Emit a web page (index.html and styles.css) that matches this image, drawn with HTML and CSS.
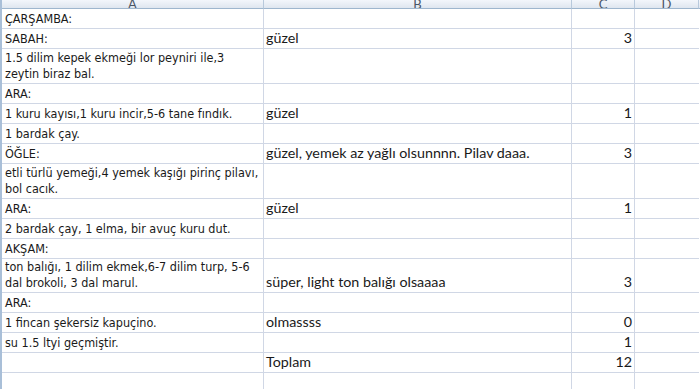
FILE: index.html
```html
<!DOCTYPE html>
<html lang="tr">
<head>
<meta charset="utf-8">
<title>Çarşamba</title>
<link rel="stylesheet" href="styles.css">
</head>
<body>
<div class="sheet">
  <div class="row head">
    <div class="hc">A</div><div class="hc">B</div><div class="hc">C</div><div class="hc">D</div><div class="hc end"></div>
  </div>
  <div class="row"><div class="c a">ÇARŞAMBA:</div><div class="c b"></div><div class="c n"></div><div class="c d"></div><div class="c e"></div></div>
  <div class="row"><div class="c a">SABAH:</div><div class="c b">güzel</div><div class="c n">3</div><div class="c d"></div><div class="c e"></div></div>
  <div class="row tall"><div class="c a">1.5 dilim kepek ekmeği lor peyniri ile,3<br>zeytin biraz bal.</div><div class="c b"></div><div class="c n"></div><div class="c d"></div><div class="c e"></div></div>
  <div class="row"><div class="c a">ARA:</div><div class="c b"></div><div class="c n"></div><div class="c d"></div><div class="c e"></div></div>
  <div class="row"><div class="c a">1 kuru kayısı,1 kuru incir,5-6 tane fındık.</div><div class="c b">güzel</div><div class="c n">1</div><div class="c d"></div><div class="c e"></div></div>
  <div class="row"><div class="c a">1 bardak çay.</div><div class="c b"></div><div class="c n"></div><div class="c d"></div><div class="c e"></div></div>
  <div class="row"><div class="c a">ÖĞLE:</div><div class="c b">güzel, yemek az yağlı olsunnnn. Pilav daaa.</div><div class="c n">3</div><div class="c d"></div><div class="c e"></div></div>
  <div class="row tall"><div class="c a">etli türlü yemeği,4 yemek kaşığı pirinç pilavı,<br>bol cacık.</div><div class="c b"></div><div class="c n"></div><div class="c d"></div><div class="c e"></div></div>
  <div class="row"><div class="c a">ARA:</div><div class="c b">güzel</div><div class="c n">1</div><div class="c d"></div><div class="c e"></div></div>
  <div class="row"><div class="c a">2 bardak çay, 1 elma, bir avuç kuru dut.</div><div class="c b"></div><div class="c n"></div><div class="c d"></div><div class="c e"></div></div>
  <div class="row"><div class="c a">AKŞAM:</div><div class="c b"></div><div class="c n"></div><div class="c d"></div><div class="c e"></div></div>
  <div class="row tall short"><div class="c a">ton balığı, 1 dilim ekmek,6-7 dilim turp, 5-6<br>dal brokoli, 3 dal marul.</div><div class="c b">süper, light ton balığı olsaaaa</div><div class="c n">3</div><div class="c d"></div><div class="c e"></div></div>
  <div class="row"><div class="c a">ARA:</div><div class="c b"></div><div class="c n"></div><div class="c d"></div><div class="c e"></div></div>
  <div class="row"><div class="c a">1 fincan şekersiz kapuçino.</div><div class="c b">olmassss</div><div class="c n">0</div><div class="c d"></div><div class="c e"></div></div>
  <div class="row"><div class="c a">su 1.5 ltyi geçmiştir.</div><div class="c b"></div><div class="c n">1</div><div class="c d"></div><div class="c e"></div></div>
  <div class="row"><div class="c a"></div><div class="c b">Toplam</div><div class="c n">12</div><div class="c d"></div><div class="c e"></div></div>
  <div class="row"><div class="c a"></div><div class="c b"></div><div class="c n"></div><div class="c d"></div><div class="c e"></div></div>
</div>
</body>
</html>
```

FILE: styles.css
```css
html, body {
  margin: 0;
  padding: 0;
  background: #ffffff;
}
.sheet {
  width: 700px;
  height: 389px;
  overflow: hidden;
  display: flex;
  flex-direction: column;
  border-left: 2px solid #a9bfd8;
  box-sizing: border-box;
  background: #ffffff;
}
.row {
  display: grid;
  grid-template-columns: 262px 308px 63px 64px 1fr;
  height: 20px;
  flex: 0 0 auto;
}
.row.tall { height: 35px; }
.row.tall.short { height: 34px; }
.row.head { height: 9px; }
.hc {
  box-sizing: border-box;
  height: 9px;
  overflow: hidden;
  background: linear-gradient(#f3f6fb, #dfe6ef);
  border-right: 1px solid #b8c9dc;
  border-bottom: 1px solid #9eb6ce;
  text-align: center;
  font-family: "Lato", "Liberation Sans", sans-serif;
  font-size: 13px;
  line-height: 8px;
  color: #4a5566;
}
.hc.end { border-right: none; }
.c {
  box-sizing: border-box;
  border-right: 1px solid #d0d7e5;
  border-bottom: 1px solid #d0d7e5;
  overflow: hidden;
  white-space: nowrap;
  display: flex;
  align-items: flex-end;
  color: #1a1a1a;
}
.c.a {
  font-family: "DejaVu Sans Condensed", "DejaVu Sans", sans-serif;
  font-stretch: condensed;
  font-size: 12.5px;
  line-height: 16px;
  padding: 0 2px 1px 3px;
}
.c.b {
  font-family: "Lato", "Liberation Sans", sans-serif;
  font-size: 14.3px;
  line-height: 16px;
  padding: 0 2px 2px 2px;
}
.c.n {
  justify-content: flex-end;
  font-family: "Lato", "Liberation Sans", sans-serif;
  font-size: 14.3px;
  line-height: 16px;
  padding: 0 2px 2px 2px;
}
.c.d { border-right: none; }
.c.e { border-right: none; border-bottom: none; }
```
